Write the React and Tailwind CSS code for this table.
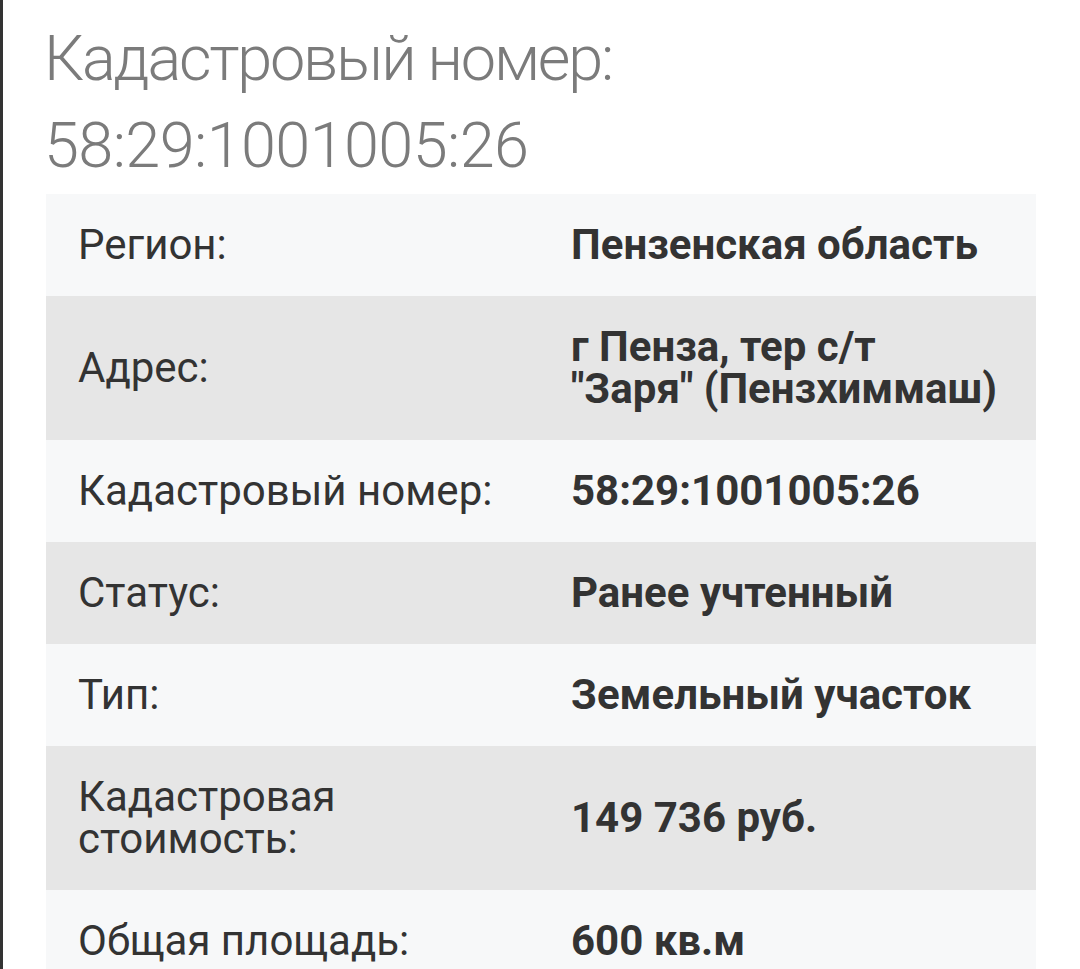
import React from "react";

const rows = [
  ["Регион:", "Пензенская область"],
  ["Адрес:", "г Пенза, тер с/т\n\"Заря\" (Пензхиммаш)"],
  ["Кадастровый номер:", "58:29:1001005:26"],
  ["Статус:", "Ранее учтенный"],
  ["Тип:", "Земельный участок"],
  ["Кадастровая\nстоимость:", "149 736 руб."],
  ["Общая площадь:", "600 кв.м"],
];

export default function App() {
  return (
    <div
      className="w-[1080px] h-[969px] overflow-hidden bg-white border-l-[3px] border-[#333333]"
      style={{ fontFamily: "Roboto, 'Noto Sans', sans-serif" }}
    >
      <div className="pl-[43px] pr-[44px] pt-[15px]">
        <h1 className="text-[63px] leading-[87px] font-light text-[#7b7b7b]">
          <span className="block -ml-[2px] tracking-[-2.2px]">Кадастровый номер:</span>
          <span className="block -ml-[2px] tracking-[-0.6px]">58:29:1001005:26</span>
        </h1>
        <div className="mt-[5px] flex flex-col">
          {rows.map(([label, value], i) => (
            <div
              key={i}
              className={`grid grid-cols-2 items-center py-[30px] ${
                i % 2 === 0 ? "bg-[#f7f8f9]" : "bg-[#e6e6e6]"
              }`}
            >
              <div className="pl-[32px] pr-4 text-[42px] leading-[42px] text-[#333333] whitespace-pre-line">
                {label}
              </div>
              <div className="pl-[30px] pr-2 text-[42px] leading-[42px] font-bold text-[#333333] whitespace-pre-line">
                {value}
              </div>
            </div>
          ))}
        </div>
      </div>
    </div>
  );
}
